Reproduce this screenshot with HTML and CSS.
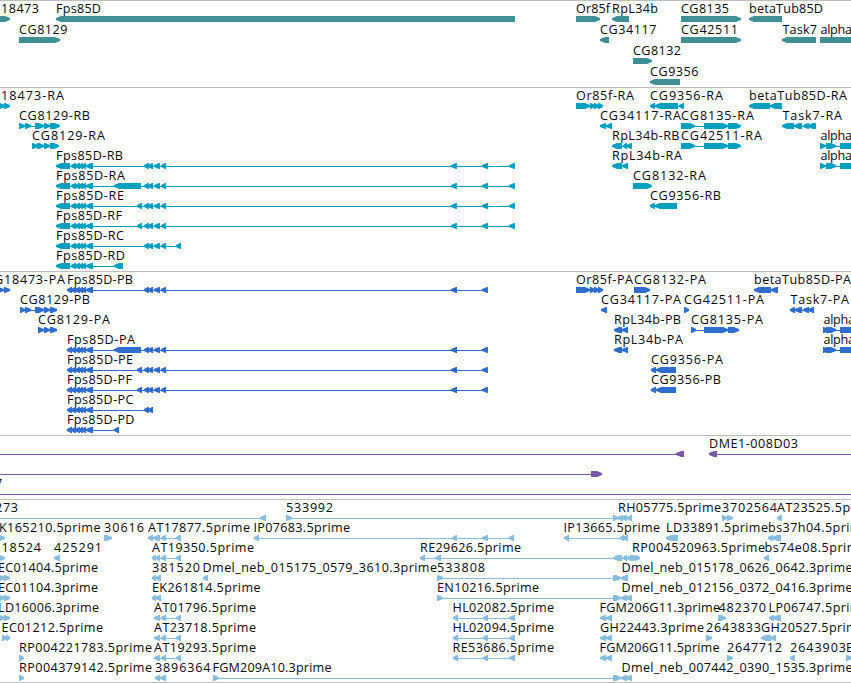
FILE: index.html
```html
<!DOCTYPE html>
<html lang="en">
<head>
<meta charset="utf-8">
<title>Genome browser</title>
<link rel="stylesheet" href="styles.css">
</head>
<body>
<main class="browser">
  <svg class="track genes" data-track="genes"></svg>
  <svg class="track transcripts" data-track="transcripts"></svg>
  <svg class="track proteins" data-track="proteins"></svg>
  <svg class="track clones" data-track="clones"></svg>
  <svg class="track ests" data-track="ests"></svg>
</main>
<script src="tracks.js"></script>
</body>
</html>
```
FILE: styles.css
```css
body {
  margin: 0;
  background: #fff;
}

.browser {
  display: flex;
  flex-direction: column;
  width: 851px;
  height: 683px;
  overflow: hidden;
  border-bottom: 1px solid #bebebe;
  box-sizing: border-box;
}

.track {
  display: block;
  flex: none;
  width: 851px;
  box-sizing: border-box;
  border-top: 1px solid #bebebe;
  overflow: hidden;
  font-family: "Open Sans", "Noto Sans", sans-serif;
  font-size: 12.6px;
}

.track text {
  fill: #080808;
}

.genes {
  height: 87px;
  color: #3f8f95;
}

.transcripts {
  height: 184px;
  color: #009fbf;
}

.proteins {
  height: 164px;
  color: #306cce;
}

.clones {
  height: 64px;
  color: #7759a8;
}

.ests {
  height: 183px;
  color: #88bcde;
}

.exon,
.intron {
  fill: currentColor;
}

.intron {
  shape-rendering: crispEdges;
}
```
FILE: tracks.js
```js
// Feature: [label, label start, label end, parts].
// Parts: L/R = exon pointing left/right, _ = extend the intron line to x.
const fpsR = 'L56,70 L71,76 L75,80 L79,83 L82,86 L86,93';
const fpsP = 'L67,72 L71,76 L75,80 L79,83 L82,86 L86,93';
const mid = ' L144,149 L148,153 L154,160 L161,166';
const far = ' L451,457 L482,488 L509,515';
const farP = ' L451,457 L482,488';
const at = 'L154,160 L161,166 L176,181';
const hl = 'L453,458 L483,488 L509,515';
const fgm = 'L600,606 L606,612';

const tracks = {
  genes: { pitch: 21, rows: [
    [['18473', 1, 39, 'R-10,10'], ['Fps85D', 56, 101, 'L56,515'], ['Or85f', 576, 610, 'R576,600'],
     ['RpL34b', 612, 658, 'L612,629'], ['CG8135', 681, 729, 'R681,741'], ['betaTub85D', 749, 823, 'L749,782']],
    [['CG8129', 19, 67.5, 'R19,60'], ['CG34117', 600, 656.5, 'L600,609'], ['CG42511', 681, 738, 'R681,741'],
     ['Task7', 782.5, 817, 'L782,816'], ['alpha', 820.5, 852, 'R820,870']],
    [['CG8132', 633, 681, 'R633,652']],
    [['CG9356', 650, 698.5, 'L650,680']]
  ] },
  transcripts: { pitch: 20, rows: [
    [['18473-RA', 1, 64, 'R-1,5 R4,10'], ['Or85f-RA', 576, 634, 'R576,590 R590,595 R594,599 R598,603'],
     ['CG9356-RA', 650, 723, 'L650,655 L655,678 L679,684'], ['betaTub85D-RA', 749, 847, 'L749,770 L770,782']],
    [['CG8129-RB', 19, 90, 'R19,25 R25,31 R35,44 R44,50 R50,60'], ['CG34117-RA', 600, 681, 'L600,606 L606,612'],
     ['CG8135-RA', 681, 754, 'R681,695 R704,728 R728,741'], ['Task7-RA', 782.5, 842, 'L782,794 L794,802 L803,809 L808,816']],
    [['CG8129-RA', 32, 105, 'R32,38 R37,44 R44,50 R50,59'], ['RpL34b-RB', 612, 679.5, 'L612,622 L623,627 L626,632'],
     ['CG42511-RA', 681, 762, 'R681,695 R704,728 R728,741'], ['alpha', 820.5, 852, 'R820,826 R826,836 R840,870']],
    [['Fps85D-RB', 56, 123, fpsR + mid + far], ['RpL34b-RA', 612, 682, 'L612,622 L622,628'],
     ['alpha', 820.5, 852, 'R820,826 R826,836 R840,870']],
    [['Fps85D-RA', 56, 125, fpsR + ' L114,141' + mid + far], ['CG8132-RA', 633, 706, 'R633,652']],
    [['Fps85D-RE', 56, 124, fpsR + ' L137,142' + mid + far], ['CG9356-RB', 650, 721, 'L650,655 L655,677']],
    [['Fps85D-RF', 56, 122, fpsR + ' L137,142' + mid + far]],
    [['Fps85D-RC', 56, 124, fpsR + mid + ' L176,181']],
    [['Fps85D-RD', 56, 125, fpsR + ' L114,123']]
  ] },
  proteins: { pitch: 20, rows: [
    [['G18473-PA', -6, 65, 'R-4,4 R4,10'], ['Fps85D-PB', 67, 133, fpsP + mid + farP],
     ['Or85f-PA', 576, 633, 'R576,590 R590,595 R594,599 R598,603'], ['CG8132-PA', 634, 706, 'R634,650'],
     ['betaTub85D-PA', 754, 851, 'L754,771 L771,778']],
    [['CG8129-PB', 20, 90, 'R20,25 R25,31 R35,44 R44,50 R50,57'], ['CG34117-PA', 601, 681, 'L601,607'],
     ['CG42511-PA', 684, 764, 'R684,689'], ['Task7-PA', 790.5, 849, 'L790,795 L795,802 L803,809 L808,814']],
    [['CG8129-PA', 38, 110, 'R38,44 R44,50 R50,57'], ['RpL34b-PB', 614, 681, 'L614,622 L622,628'],
     ['CG8135-PA', 691, 763, 'R691,696 R704,728 R728,739'], ['alpha', 823.5, 855, 'R823,828 R826,836 R840,870']],
    [['Fps85D-PA', 67, 135, fpsP + ' L114,141' + mid + farP], ['RpL34b-PA', 614, 683, 'L614,622 L622,628'],
     ['alpha', 823.5, 855, 'R823,828 R826,836 R840,870']],
    [['Fps85D-PE', 67, 133, fpsP + ' L137,142' + mid + farP], ['CG9356-PA', 651, 723, 'L651,656 L656,676']],
    [['Fps85D-PF', 67, 132, fpsP + ' L137,142' + mid + farP], ['CG9356-PB', 651, 721, 'L651,656 L656,676']],
    [['Fps85D-PC', 67, 133.5, fpsP + ' L144,149 L148,153']],
    [['Fps85D-PD', 67, 134.5, fpsP + ' L114,119']]
  ] },
  clones: { pitch: 20, rows: [
    [['', 0, 0, '_-5 L676,684'], ['DME1-008D03', 709, 798, 'L709,717 _870']],
    [['', 0, 0, '_-5 R591,602']],
    [['7', -5, 2.5, '_-5 _870']]
  ] },
  ests: { pitch: 20, rows: [
    [['273', -5, 18, '_-5 L260,266'], ['533992', 286, 333, 'R286,292 R613,618 L617,623 L622,627 L627,632'],
     ['RH05775.5prime', 618, 721, ''], ['3702564', 722, 777, 'R722,727 R727,733'], ['AT23525.5prime', 777, 879, 'L777,782']],
    [['K165210.5prime', -1, 100.5, 'R-2,5'], ['30616', 104, 144, 'R104,112'], ['AT17877.5prime', 148, 250, 'L148,153 L153,160 L161,166 L176,181'],
     ['IP07683.5prime', 253.5, 350, 'L254,259 L452,457 L482,488 L509,514'], ['IP13665.5prime', 563.5, 660, 'L564,569 L620,624 L623,628'],
     ['LD33891.5prime', 666, 768, 'L666,678'], ['bs37h04.5prime', 768, 869, 'L768,773 L772,781']],
    [['18524', 1.5, 41, 'R-2,5'], ['425291', 54, 102, 'L54,60'], ['AT19350.5prime', 152, 254, 'L152,156 L156,160 L161,166 L176,181'],
     ['RE29626.5prime', 420, 521, 'L420,425 L435,441 L613,622 L623,627 L627,632 R632,636 R635,640'],
     ['RP004520963.5prime', 632, 765, ''], ['bs74e08.5prime', 764.5, 866, 'L764,769']],
    [['EC01404.5prime', -2, 98, 'R-1,5 R4,10'], ['381520', 152, 200, 'L152,156 L155,161'],
     ['Dmel_neb_015175_0579_3610.3prime', 202.5, 437, 'L203,208'], ['533808', 437, 485, 'R437,443 R613,621 L621,628'],
     ['Dmel_neb_015178_0626_0642.3prime', 621.5, 852.5, '']],
    [['EC01104.3prime', -2, 98, 'R-1,5 R4,10'], ['EK261814.5prime', 152, 260.5, 'L152,156 L155,161'],
     ['EN10216.5prime', 437, 539, 'R437,443 R613,621 L621,627 L626,632'], ['Dmel_neb_012156_0372_0416.3prime', 621.5, 852.5, '']],
    [['LD16006.3prime', -2, 99, 'R-1,5 R4,10'], ['AT01796.5prime', 154, 256, at], ['HL02082.5prime', 452.5, 554, hl],
     ['FGM206G11.3prime', 599.5, 720, fgm], ['482370', 718.5, 766, 'R718,726'], ['LP06747.5prime', 768.5, 869, 'L769,774 L773,781']],
    [['EC01212.5prime', 1.5, 103, 'R2,7 R6,10'], ['AT23718.5prime', 154, 256, at], ['HL02094.5prime', 452.5, 554, hl],
     ['GH22443.3prime', 600, 704, fgm], ['2643833', 706, 761, 'R706,712'], ['GH20527.5prime', 761, 865, 'L761,771 L770,776']],
    [['RP004221783.5prime', 19, 152, 'R19,24'], ['AT19293.5prime', 154, 256, at], ['RE53686.5prime', 452.5, 554, hl],
     ['FGM206G11.5prime', 599.5, 719.5, fgm], ['2647712', 727, 782, 'R727,733'], ['2643903', 790, 846, 'L790,795'], ['E', 846, 853, 'R846,852']],
    [['RP004379142.5prime', 19, 152, 'R19,24'], ['3896364', 155, 210.5, 'L155,160 L160,166'],
     ['FGM209A10.3prime', 212.5, 331.5, 'R213,219 R613,621 L621,627 L626,632'], ['Dmel_neb_007442_0390_1535.3prime', 621.5, 852.5, '']]
  ] }
};

const NS = 'http://www.w3.org/2000/svg';
function add(parent, tag, attrs, text) {
  const el = document.createElementNS(NS, tag);
  for (const key in attrs) el.setAttribute(key, attrs[key]);
  if (text) el.textContent = text;
  parent.appendChild(el);
}

for (const svg of document.querySelectorAll('[data-track]')) {
  const track = tracks[svg.dataset.track];
  track.rows.forEach((row, i) => {
    const top = 15 + i * track.pitch;
    for (const [label, start, end, parts] of row) {
      const xs = [];
      for (const part of parts.split(' ').filter(Boolean)) {
        const [a, b] = part.slice(1).split(',').map(Number);
        xs.push(a);
        if (part[0] === '_') continue;
        xs.push(b);
        const head = Math.min(5, b - a - 1);
        const [tip, neck, tail] = part[0] === 'L' ? [a, a + head, b] : [b, b - head, a];
        add(svg, 'polygon', { class: 'exon',
          points: `${tip},${top + 2} ${neck},${top} ${tail},${top} ${tail},${top + 6} ${neck},${top + 6} ${tip},${top + 4}` });
      }
      if (xs.length) {
        const from = Math.min(...xs);
        add(svg, 'rect', { class: 'intron', x: from, y: top + 3, width: Math.max(...xs) - from, height: 1 });
      }
      if (label) add(svg, 'text', { x: start, y: top - 3, textLength: end - start }, label);
    }
  });
}
```
